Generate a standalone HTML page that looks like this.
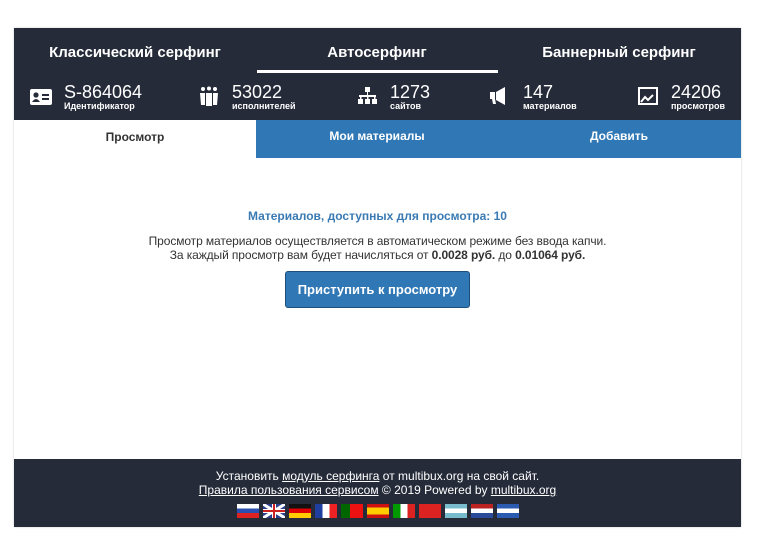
<!DOCTYPE html>
<html><head><meta charset="utf-8"><style>
*{margin:0;padding:0;box-sizing:border-box}
body{width:767px;height:543px;background:#fff;font-family:"Liberation Sans","DejaVu Sans",sans-serif;position:relative;overflow:hidden}
.card{position:absolute;left:14px;top:28px;width:727px;height:499px;background:#fff;box-shadow:0 0 2px #ccc}
.dark{background:#252b39;color:#fff}
.a{position:absolute}
.h{font-weight:bold;font-size:15px;text-align:center;top:16px}
.num{font-size:18px;color:#fff;line-height:18px}
.lbl{font-size:9px;font-weight:bold;color:#fff;line-height:10px}
.flag{position:absolute;top:504px;width:22px;height:14px}
</style></head><body>
<div class="card">
<div class="a dark" style="left:0;top:0;width:727px;height:92px"></div>
<div class="a h" style="left:0;width:242px;color:#fff">Классический серфинг</div>
<div class="a h" style="left:242px;width:242px;color:#fff">Автосерфинг</div>
<div class="a h" style="left:484px;width:242px;color:#fff">Баннерный серфинг</div>
<div class="a" style="left:243px;top:42px;width:241px;height:3px;background:#fff"></div>

<svg class="a" style="left:16px;top:60px" width="22" height="17" viewBox="0 0 22 17"><rect x="0" y="1" width="22" height="16" rx="2" fill="#fff"/><circle cx="6" cy="7" r="2.6" fill="#252b39"/><path d="M2 14q4-6 8 0z" fill="#252b39"/><rect x="12" y="6" width="7" height="2" fill="#252b39"/><rect x="12" y="10" width="7" height="2" fill="#252b39"/></svg>
<div class="a num" style="left:50px;top:55px">S-864064</div>
<div class="a lbl" style="left:50px;top:73px">Идентификатор</div>

<svg class="a" style="left:185px;top:58px" width="20" height="20" viewBox="0 0 20 20" fill="#fff"><circle cx="4" cy="3" r="2"/><circle cx="10" cy="2.5" r="2"/><circle cx="16" cy="3" r="2"/><path d="M1 7h5v12H2zM7 7h6v13H7zM14 7h5l-1 12h-4z"/></svg>
<div class="a num" style="left:218px;top:55px">53022</div>
<div class="a lbl" style="left:218px;top:73px">исполнителей</div>

<svg class="a" style="left:343px;top:59px" width="21" height="18" viewBox="0 0 21 18" fill="#fff"><rect x="8" y="0" width="5" height="5"/><rect x="10" y="5" width="1" height="4"/><rect x="2" y="8" width="17" height="2"/><rect x="3" y="9" width="1.5" height="4"/><rect x="10" y="9" width="1.5" height="4"/><rect x="17" y="9" width="1.5" height="4"/><rect x="1" y="12" width="5" height="5"/><rect x="8" y="12" width="5" height="5"/><rect x="15" y="12" width="5" height="5"/></svg>
<div class="a num" style="left:376px;top:55px">1273</div>
<div class="a lbl" style="left:376px;top:73px">сайтов</div>

<svg class="a" style="left:476px;top:59px" width="20" height="18" viewBox="0 0 20 18" fill="#fff"><rect x="0" y="5" width="5" height="7"/><path d="M6 5l9-5v18l-9-5z"/><path d="M2 12h3l1 5H3z"/></svg>
<div class="a num" style="left:509px;top:55px">147</div>
<div class="a lbl" style="left:509px;top:73px">материалов</div>

<svg class="a" style="left:624px;top:59px" width="20" height="19" viewBox="0 0 20 19"><rect x="1" y="1" width="18" height="16" fill="none" stroke="#fff" stroke-width="2"/><path d="M3 15l4-5 3 3 5-5" fill="none" stroke="#fff" stroke-width="2"/></svg>
<div class="a num" style="left:657px;top:55px">24206</div>
<div class="a lbl" style="left:657px;top:73px">просмотров</div>

<div class="a" style="left:242px;top:92px;width:485px;height:38px;background:#3078b5"></div>
<div class="a" style="left:0;top:102px;width:242px;text-align:center;font-size:12px;font-weight:bold;color:#333">Просмотр</div>
<div class="a" style="left:242px;top:101px;width:242px;text-align:center;font-size:12px;font-weight:bold;color:#fff">Мои материалы</div>
<div class="a" style="left:484px;top:101px;width:242px;text-align:center;font-size:12px;font-weight:bold;color:#fff">Добавить</div>

<div class="a" style="left:0;top:181px;width:727px;text-align:center;font-size:12px;font-weight:bold;color:#3a7ab3">Материалов, доступных для просмотра: 10</div>
<div class="a" style="left:0;top:206px;width:727px;text-align:center;font-size:12px;line-height:14px;color:#333;letter-spacing:-0.1px">Просмотр материалов осуществляется в автоматическом режиме без ввода капчи.<br>За каждый просмотр вам будет начисляться от <b>0.0028 руб.</b> до <b>0.01064 руб.</b></div>
<div class="a" style="left:271px;top:243px;width:185px;height:37px;background:#3078b5;border:1px solid #1e4f7c;border-radius:3px;color:#fff;font-weight:bold;font-size:13px;text-align:center;line-height:35px">Приступить к просмотру</div>

<div class="a dark" style="left:0;top:431px;width:727px;height:68px"></div>
<div class="a" style="left:0;top:441px;width:727px;text-align:center;font-size:12px;line-height:14px;color:#fff">Установить <u>модуль серфинга</u> от multibux.org на свой сайт.<br><u>Правила пользования сервисом</u> © 2019 Powered by <u>multibux.org</u></div>
</div>
<div class="flag" style="left:237px;background:linear-gradient(#fff 33%,#2a4fb0 33% 66%,#d22 66%)"></div>
<div class="flag" style="left:263px;background:#2a3f8f"><svg width="22" height="14"><path d="M0 0L22 14M22 0L0 14" stroke="#fff" stroke-width="3"/><path d="M11 0v14M0 7h22" stroke="#fff" stroke-width="4"/><path d="M11 0v14M0 7h22" stroke="#c22" stroke-width="2"/></svg></div>
<div class="flag" style="left:289px;background:linear-gradient(#111 33%,#d00 33% 66%,#fc0 66%)"></div>
<div class="flag" style="left:315px;background:linear-gradient(90deg,#1f3fa0 33%,#fff 33% 66%,#e22 66%)"></div>
<div class="flag" style="left:341px;background:linear-gradient(90deg,#060 40%,#e11 40%)"></div>
<div class="flag" style="left:367px;background:linear-gradient(#c11 25%,#fc0 25% 75%,#c11 75%)"></div>
<div class="flag" style="left:393px;background:linear-gradient(90deg,#090 33%,#fff 33% 66%,#d22 66%)"></div>
<div class="flag" style="left:419px;background:#d22"></div>
<div class="flag" style="left:445px;background:linear-gradient(#7bc 33%,#fff 33% 66%,#7bc 66%)"></div>
<div class="flag" style="left:471px;background:linear-gradient(#b22 33%,#fff 33% 66%,#2a4a9a 66%)"></div>
<div class="flag" style="left:497px;background:linear-gradient(#2a5bb0 33%,#fff 33% 66%,#2a5bb0 66%)"></div>
</body></html>
